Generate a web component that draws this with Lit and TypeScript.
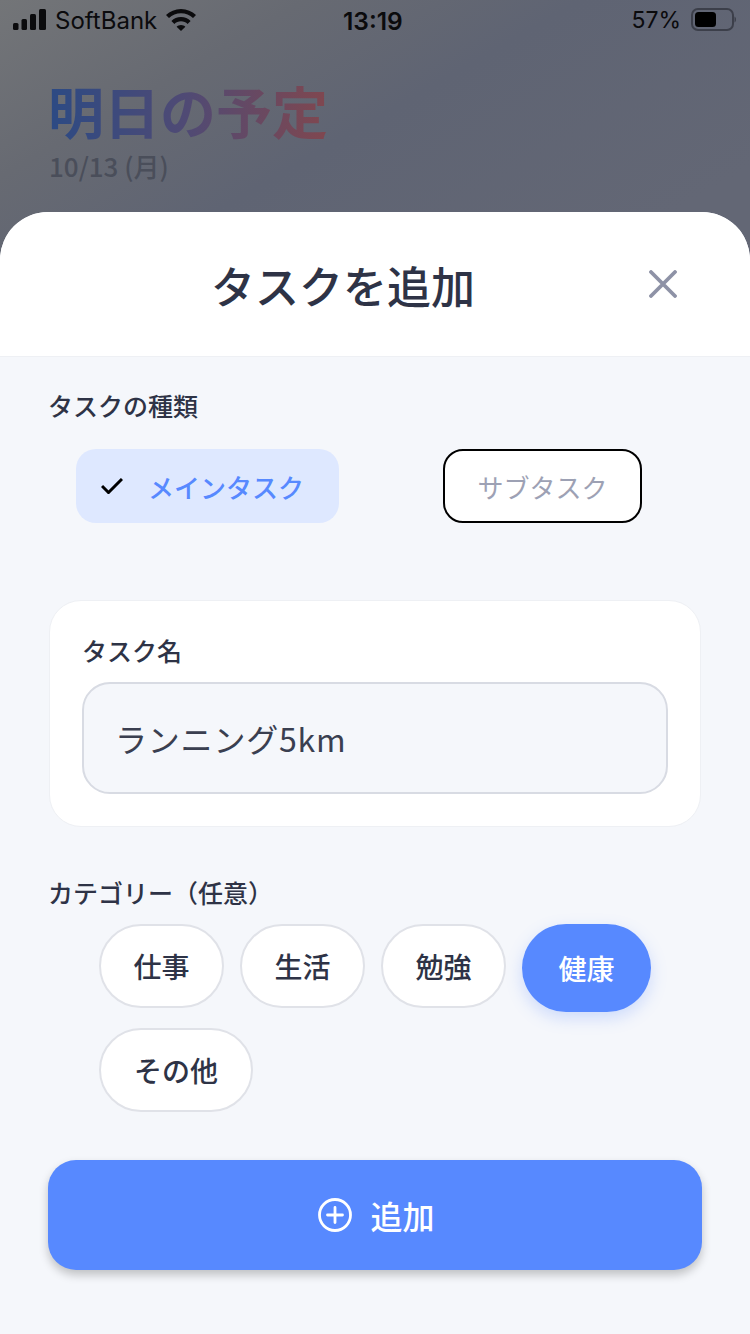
import { LitElement, html, css } from "lit";
import { customElement } from "lit/decorators.js";

@customElement("app-root")
export class AppRoot extends LitElement {
  static styles = css`
    :host { display: block; width: 750px; height: 1334px; overflow: hidden; font-family: "Noto Sans CJK JP", "Noto Sans", sans-serif; }
    * { box-sizing: border-box; }
    .screen { width: 750px; height: 1334px; display: flex; flex-direction: column;
      background: linear-gradient(150deg, #737578 0%, #676a72 10%, #5f6473 19%, #636775 34%); }
    .status { height: 40px; display: flex; align-items: center; justify-content: space-between; position: relative; padding: 0 14px 0 13px; color: #0b0b0d; font-family: Inter, "Liberation Sans", sans-serif; font-size: 24px; flex: none; }
    .st-left { display: flex; align-items: center; }
    .st-left span { margin: 0 9px 0 9px; }
    .st-time { position: absolute; left: 343px; top: 6px; font-weight: 600; line-height: 30px; font-size: 24.5px; }
    .st-right { display: flex; align-items: center; gap: 10px; font-size: 23px; }
    .hero { height: 172px; padding: 31px 0 0 48px; flex: none; }
    .hero h1 { margin: 0; font-size: 56px; line-height: 78px; font-weight: 700; width: 280px; white-space: nowrap; letter-spacing: 0;
      background: linear-gradient(90deg, #2c4a84 0%, #504a74 50%, #80474f 100%); -webkit-background-clip: text; background-clip: text; color: transparent; }
    .hero p { margin: 0 0 0 1px; font-size: 26px; line-height: 34px; color: #4a4e5a; font-weight: 500; }
    .sheet { flex: 1; border-radius: 48px 48px 0 0; background: #f5f7fb; overflow: hidden; display: flex; flex-direction: column; }
    .head { height: 145px; background: #fff; border-bottom: 1px solid #eef0f4; display: flex; align-items: center; position: relative; flex: none; }
    .head h2 { margin: 0 0 0 211px; font-size: 44px; line-height: 60px; font-weight: 500; color: #2e3346; position: relative; top: 1px; }
    .close { position: absolute; right: 73px; top: 58px; width: 28px; height: 28px; }
    .body { padding: 0 49px; flex: 1; }
    .label { font-size: 25px; line-height: 34px; font-weight: 500; color: #2e3346; margin: 0 0 0 -1px; }
    .l1 { margin-top: 31px; }
    .types { display: flex; gap: 104px; margin: 27px 0 0 27px; }
    .type { height: 74px; border-radius: 20px; display: flex; align-items: center; font-size: 26px; }
    .type.main { width: 263px; background: #dee8ff; color: #5789ff; padding-left: 25px; font-weight: 500; }
    .type.main svg { margin-right: 25px; }
    .type.sub { width: 199px; background: #fff; border: 2px solid #000; color: #9da1b4; justify-content: center; }
    .card { margin-top: 77px; height: 227px; background: #fff; border: 1px solid #eef0f4; border-radius: 32px; padding: 32px 32px 0 32px; }
    .card .label { margin: 0 0 15px 0; }
    .input { height: 112px; border: 2px solid #d8dbe3; border-radius: 28px; background: #f5f7fb; display: flex; align-items: center; padding-left: 31px; font-size: 32px; letter-spacing: .8px; color: #3a3f50; }
    .l2 { margin-top: 48px; }
    .chips { display: flex; flex-wrap: wrap; gap: 16px; margin: 15px 0 0 50px; width: 570px; align-items: flex-start; }
    .chip { height: 84px; border-radius: 42px; border: 2px solid #e0e2e8; background: #fff; display: flex; align-items: center; justify-content: center; padding: 0 32.500px; font-size: 28px; font-weight: 500; color: #2e3346; }
    .chip.wide { padding: 0 33px; }
    .chip.on { height: 88px; border-radius: 44px; border: none; background: #5789ff; color: #fff; padding: 0 36.500px; box-shadow: 0 6px 16px rgba(87,137,255,.25); }
    .add { margin: 48px 0 0 -1px; width: 654px; height: 110px; border-radius: 28px; background: #5789ff; color: #fff; display: flex; align-items: center; justify-content: center; gap: 18px; padding-left: 3px; font-size: 32px; font-weight: 500; box-shadow: 0 5px 10px rgba(0,0,0,.22); }
  `;

  render() {
    return html`<div class="screen">
      <div class="status">
        <div class="st-left">
          <svg width="33" height="22" viewBox="0 0 33 22" fill="#0b0b0d"><rect x="0" y="14" width="5.500" height="7" rx="1.500"/><rect x="8.500" y="10" width="5.500" height="11" rx="1.500"/><rect x="17" y="5" width="6" height="16" rx="1.500"/><rect x="26" y="0" width="7" height="21" rx="1.500"/></svg>
          <span>SoftBank</span>
          <svg width="30" height="22" viewBox="0 0 30 22" fill="#0b0b0d"><path d="M15 0C9 0 4 2.400 0 6l3 3c3.200-3 7.400-4.800 12-4.800S23.800 6 27 9l3-3C26 2.400 21 0 15 0Z"/><path d="M15 8c-3.800 0-7.200 1.500-9.600 3.900l3 3C10 13.200 12.400 12.200 15 12.200s5 1 6.600 2.700l3-3C22.200 9.500 18.800 8 15 8Z"/><path d="M15 16c-1.700 0-3.300.7-4.400 1.800L15 22l4.400-4.200C18.300 16.700 16.700 16 15 16Z"/></svg>
        </div>
        <div class="st-time">13:19</div>
        <div class="st-right">
          <span>57%</span>
          <svg width="45" height="24" viewBox="0 0 45 24"><rect x="1" y="1" width="41" height="21" rx="6" fill="none" stroke="#3c3f4a" stroke-width="2"/><rect x="4" y="4" width="21" height="15" rx="3.500" fill="#000"/><path d="M43.500 8.500v6c1-.5 1.500-1.700 1.500-3s-.5-2.500-1.500-3Z" fill="#3c3f4a"/></svg>
        </div>
      </div>
      <div class="hero">
        <h1>明日の予定</h1>
        <p>10/13 (月)</p>
      </div>
      <div class="sheet">
        <div class="head">
          <h2>タスクを追加</h2>
          <svg class="close" viewBox="0 0 28 28" fill="none" stroke="#8e92a6" stroke-width="3.800" stroke-linecap="round"><path d="M2 2 26 26M26 2 2 26"/></svg>
        </div>
        <div class="body">
          <p class="label l1">タスクの種類</p>
          <div class="types">
            <div class="type main">
              <svg width="22" height="16" viewBox="0 0 22 16" fill="none" stroke="#000" stroke-width="3"><path d="M1 8 7.500 14.500 21 1"/></svg>
              メインタスク
            </div>
            <div class="type sub">サブタスク</div>
          </div>
          <div class="card">
            <p class="label">タスク名</p>
            <div class="input">ランニング5km</div>
          </div>
          <p class="label l2">カテゴリー（任意）</p>
          <div class="chips">
            <div class="chip">仕事</div>
            <div class="chip">生活</div>
            <div class="chip">勉強</div>
            <div class="chip on">健康</div>
            <div class="chip wide">その他</div>
          </div>
          <div class="add">
            <svg width="34" height="34" viewBox="0 0 34 34" fill="none" stroke="#fff" stroke-width="2.800" stroke-linecap="round"><circle cx="17" cy="17" r="15.500"/><path d="M17 9.500v15M9.500 17h15"/></svg>
            追加
          </div>
        </div>
      </div>
    </div>`;
  }
}
